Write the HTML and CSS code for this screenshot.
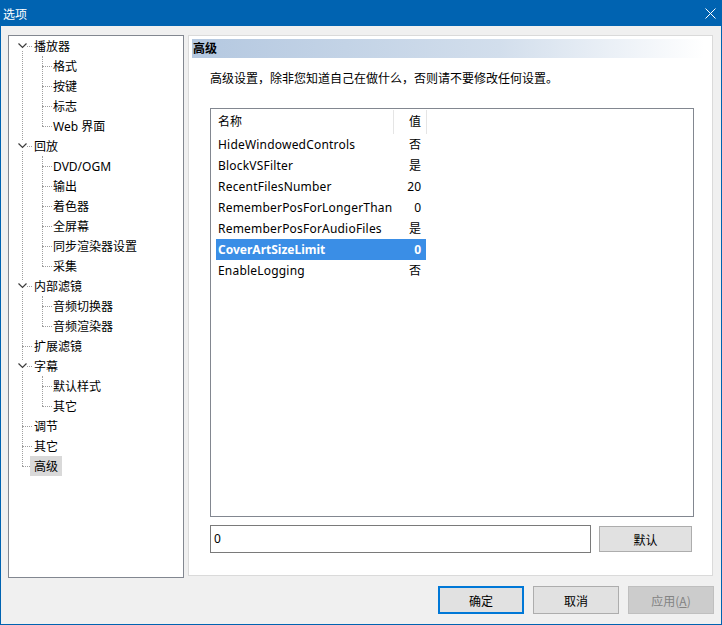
FILE: index.html
```html
<!DOCTYPE html>
<html lang="zh-CN">
<head>
<meta charset="utf-8">
<title>选项</title>
<link rel="stylesheet" href="styles.css">
</head>
<body>
<div class="window">
  <div class="titlebar">
    <span class="title">选项</span>
    <svg class="close" width="11" height="11" viewBox="0 0 11 11"><path d="M0.5 0.5 L10.5 10.5 M10.5 0.5 L0.5 10.5" stroke="#fff" stroke-width="1" fill="none"/></svg>
  </div>
  <div class="body">
    <div class="main">
      <div class="tree-box">
        <ul class="tree">
          <li class="root"><svg class="chev" width="9" height="9" viewBox="0 0 9 9"><path d="M0.5 2.5 L4.5 6.5 L8.5 2.5" stroke="#3c3c3c" stroke-width="1.2" fill="none"/></svg><span class="lbl">播放器</span>
            <ul class="sub">
              <li><span class="lbl">格式</span></li>
              <li><span class="lbl">按键</span></li>
              <li><span class="lbl">标志</span></li>
              <li><span class="lbl">Web 界面</span></li>
            </ul>
          </li>
          <li class="root"><svg class="chev" width="9" height="9" viewBox="0 0 9 9"><path d="M0.5 2.5 L4.5 6.5 L8.5 2.5" stroke="#3c3c3c" stroke-width="1.2" fill="none"/></svg><span class="lbl">回放</span>
            <ul class="sub">
              <li><span class="lbl">DVD/OGM</span></li>
              <li><span class="lbl">输出</span></li>
              <li><span class="lbl">着色器</span></li>
              <li><span class="lbl">全屏幕</span></li>
              <li><span class="lbl">同步渲染器设置</span></li>
              <li><span class="lbl">采集</span></li>
            </ul>
          </li>
          <li class="root"><svg class="chev" width="9" height="9" viewBox="0 0 9 9"><path d="M0.5 2.5 L4.5 6.5 L8.5 2.5" stroke="#3c3c3c" stroke-width="1.2" fill="none"/></svg><span class="lbl">内部滤镜</span>
            <ul class="sub">
              <li><span class="lbl">音频切换器</span></li>
              <li><span class="lbl">音频渲染器</span></li>
            </ul>
          </li>
          <li class="root"><span class="lbl">扩展滤镜</span></li>
          <li class="root"><svg class="chev" width="9" height="9" viewBox="0 0 9 9"><path d="M0.5 2.5 L4.5 6.5 L8.5 2.5" stroke="#3c3c3c" stroke-width="1.2" fill="none"/></svg><span class="lbl">字幕</span>
            <ul class="sub">
              <li><span class="lbl">默认样式</span></li>
              <li><span class="lbl">其它</span></li>
            </ul>
          </li>
          <li class="root"><span class="lbl">调节</span></li>
          <li class="root"><span class="lbl">其它</span></li>
          <li class="root"><span class="lbl selected">高级</span></li>
        </ul>
      </div>
      <div class="panel">
        <div class="panel-head">高级</div>
        <p class="desc">高级设置，除非您知道自己在做什么，否则请不要修改任何设置。</p>
        <div class="list">
          <div class="list-head">
            <div class="h-name">名称</div>
            <div class="h-val">值</div>
          </div>
          <div class="rows">
            <div class="row"><span class="name">HideWindowedControls</span><span class="val">否</span></div>
            <div class="row"><span class="name">BlockVSFilter</span><span class="val">是</span></div>
            <div class="row"><span class="name">RecentFilesNumber</span><span class="val">20</span></div>
            <div class="row"><span class="name">RememberPosForLongerThan</span><span class="val">0</span></div>
            <div class="row"><span class="name">RememberPosForAudioFiles</span><span class="val">是</span></div>
            <div class="row active"><span class="name">CoverArtSizeLimit</span><span class="val">0</span></div>
            <div class="row"><span class="name">EnableLogging</span><span class="val">否</span></div>
          </div>
        </div>
        <div class="edit-row">
          <div class="edit">0</div>
          <button class="btn btn-default-val">默认</button>
        </div>
      </div>
    </div>
    <div class="footer">
      <button class="btn dlg primary">确定</button>
      <button class="btn dlg">取消</button>
      <button class="btn dlg" disabled>应用(<u>A</u>)</button>
    </div>
  </div>
</div>
</body>
</html>
```

FILE: styles.css
```css
* { box-sizing: border-box; }

html, body {
  margin: 0;
  padding: 0;
  background: #f0f0f0;
}

body {
  font-family: "Noto Sans", "Noto Sans CJK SC", sans-serif;
  font-size: 12px;
  color: #000;
}

.window {
  width: 722px;
  height: 625px;
  border: 1px solid #0063b1;
  border-top: 0;
  display: flex;
  flex-direction: column;
  background: #f0f0f0;
}

.titlebar {
  height: 26px;
  margin: 0 -1px;
  background: #0063b1;
  color: #fff;
  display: flex;
  align-items: center;
  justify-content: space-between;
  padding: 0 6px 0 3px;
}

.title {
  font-family: "Noto Sans CJK SC", sans-serif;
  font-size: 12px;
}

.close { display: block; }

.body {
  flex: 1;
  display: flex;
  flex-direction: column;
  padding: 9px 8px 0 7px;
}

.main {
  display: flex;
  gap: 4px;
  align-items: flex-start;
}

/* ---------- tree ---------- */
.tree-box {
  width: 176px;
  height: 543px;
  border: 1px solid #828790;
  background: #fff;
}

.tree, .sub {
  list-style: none;
  margin: 0;
  padding: 0;
  position: relative;
}

.tree::before {
  content: "";
  position: absolute;
  left: 13px;
  top: 10px;
  bottom: 10px;
  border-left: 1px dotted #a0a0a0;
}

.tree li { position: relative; }

.tree > li::before,
.sub > li::before {
  content: "";
  position: absolute;
  top: 10px;
  height: 0;
  border-top: 1px dotted #a0a0a0;
}

.tree > li::before { left: 13px; width: 10px; }
.sub > li::before { left: 33px; width: 10px; }

.sub::before {
  content: "";
  position: absolute;
  left: 33px;
  top: 0;
  bottom: 10px;
  border-left: 1px dotted #a0a0a0;
}

.chev {
  position: absolute;
  left: 9px;
  top: 5px;
  background: #fff;
  z-index: 1;
}

.lbl {
  position: relative;
  display: inline-block;
  height: 20px;
  line-height: 22px;
  padding: 0 4px;
  white-space: nowrap;
  vertical-align: top;
}

.tree > li > .lbl { margin-left: 21px; }
.sub > li > .lbl { margin-left: 40px; }

.lbl.selected { background: #d9d9d9; }

/* ---------- panel ---------- */
.panel {
  width: 525px;
  height: 541px;
  border: 1px solid #dadada;
  background: #fff;
  padding: 3px 8px 0 3px;
}

.panel-head {
  height: 19px;
  line-height: 19px;
  padding-left: 1px;
  font-weight: bold;
  background: linear-gradient(to right, #b4c8e0 0%, #d2deec 60%, #ffffff 100%);
}

.desc {
  margin: 10px 0 20px 18px;
  height: 20px;
  line-height: 21px;
}

.list {
  margin-left: 18px;
  width: 484px;
  height: 409px;
  border: 1px solid #828790;
  background: #fff;
}

.list-head {
  display: flex;
  height: 25px;
}

.h-name, .h-val {
  height: 24px;
  line-height: 24px;
  border-right: 1px solid #e5e5e5;
  margin-top: 1px;
}

.h-name {
  width: 183px;
  padding-left: 7px;
}

.h-val {
  width: 33px;
  padding-right: 5px;
  text-align: right;
}

.rows { padding-left: 5px; }

.row {
  display: flex;
  width: 210px;
  height: 21px;
  line-height: 21px;
}

.row .name {
  width: 177px;
  padding-left: 2px;
  white-space: nowrap;
  letter-spacing: 0.2px;
}

.row .val {
  width: 33px;
  padding-right: 5px;
  text-align: right;
}

.row.active {
  background: #3a8ee6;
  color: #fff;
  font-weight: bold;
}

.row.active .name { letter-spacing: 0; }

.edit-row {
  display: flex;
  align-items: center;
  gap: 8px;
  margin: 8px 0 0 18px;
}

.edit {
  width: 381px;
  height: 28px;
  line-height: 26px;
  border: 1px solid #7a7a7a;
  padding-left: 3px;
  background: #fff;
}

.btn {
  font-family: "Noto Sans CJK SC", sans-serif;
  font-size: 12px;
  color: #000;
  background: #e1e1e1;
  border: 1px solid #adadad;
  padding: 0;
  margin: 0;
}

.btn-default-val {
  width: 93px;
  height: 26px;
}

/* ---------- footer ---------- */
.footer {
  display: flex;
  justify-content: flex-end;
  gap: 9px;
  margin: 8px -1px 0 0;
}

.dlg {
  width: 86px;
  height: 28px;
}

.dlg.primary {
  border: 2px solid #0078d7;
}

.dlg:disabled {
  background: #cccccc;
  border-color: #bfbfbf;
  color: #838383;
}
```
